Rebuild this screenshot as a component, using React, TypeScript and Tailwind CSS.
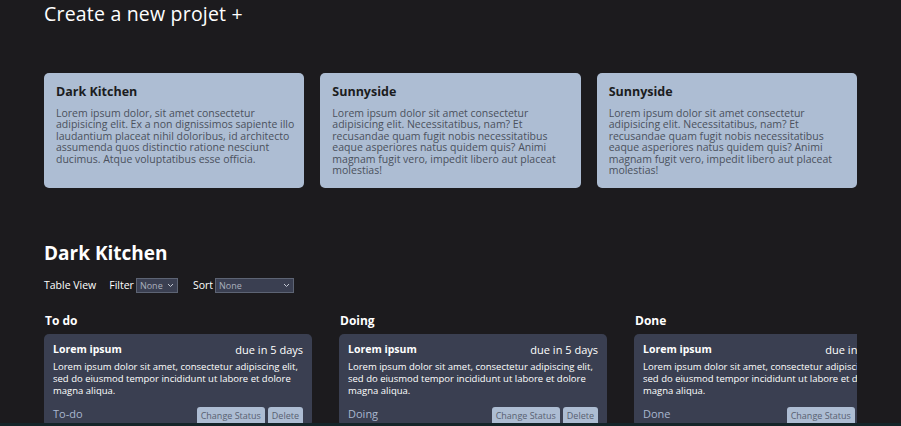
const projects = [
  {
    title: 'Dark Kitchen',
    text: 'Lorem ipsum dolor, sit amet consectetur adipisicing elit. Ex a non dignissimos sapiente illo laudantium placeat nihil doloribus, id architecto assumenda quos distinctio ratione nesciunt ducimus. Atque voluptatibus esse officia.',
  },
  {
    title: 'Sunnyside',
    text: 'Lorem ipsum dolor sit amet consectetur adipisicing elit. Necessitatibus, nam? Et recusandae quam fugit nobis necessitatibus eaque asperiores natus quidem quis? Animi magnam fugit vero, impedit libero aut placeat molestias!',
  },
  {
    title: 'Sunnyside',
    text: 'Lorem ipsum dolor sit amet consectetur adipisicing elit. Necessitatibus, nam? Et recusandae quam fugit nobis necessitatibus eaque asperiores natus quidem quis? Animi magnam fugit vero, impedit libero aut placeat molestias!',
  },
];

const columns = [
  { title: 'To do', status: 'To-do' },
  { title: 'Doing', status: 'Doing' },
  { title: 'Done', status: 'Done' },
];

function Select({ width }: { width: string }) {
  return (
    <div
      className={`${width} h-[15px] flex items-center justify-between px-[3px] bg-[#3a3f51] border border-[#5d6474] text-[9px] font-normal text-[#aab0bd]`}
    >
      <span>None</span>
      <svg width="7" height="5" viewBox="0 0 7 5" fill="none">
        <path d="M1 1l2.5 2.5L6 1" stroke="#c4c9d4" strokeWidth="1" />
      </svg>
    </div>
  );
}

export default function App() {
  return (
    <div className="h-[426px] overflow-hidden bg-[#1c1b1e] text-white px-[44px] font-['Open_Sans',sans-serif]">
      {/* Header */}
      <h1 className="pt-[1px] text-[19.5px] leading-[26px] tracking-[0.2px]">Create a new projet +</h1>

      {/* Projects */}
      <div className="mt-[46px] grid grid-cols-3 gap-[16px]">
        {projects.map((p, i) => (
          <div key={i} className="h-[115px] bg-[#adbdd3] rounded-[5px] pl-[12px] pr-[8px] pt-[11px]">
            <h3 className="text-[12.5px] font-bold text-[#1b1c20] leading-[16px]">{p.title}</h3>
            <p className="mt-[8px] text-[10.5px] leading-[11.4px] text-[#4b515d]">{p.text}</p>
          </div>
        ))}
      </div>

      {/* Board */}
      <h2 className="mt-[52px] text-[19px] font-bold leading-[26px]">Dark Kitchen</h2>
      <div className="mt-[12px] flex items-center text-[10.5px] font-medium">
        <span>Table View</span>
        <span className="ml-[13px] mr-[2px]">Filter</span>
        <Select width="w-[42px]" />
        <span className="ml-[15px] mr-[2px]">Sort</span>
        <Select width="w-[79px]" />
      </div>

      <div className="mt-[19px] flex gap-[27px] overflow-hidden">
        {columns.map((c) => (
          <div key={c.title} className="w-[268px] shrink-0">
            <h4 className="text-[12px] font-bold leading-[16px] pl-[1px]">{c.title}</h4>
            <div className="mt-[5px] bg-[#3a3f51] rounded-[5px] px-[9px] pt-[8px] pb-[3px]">
              <div className="flex justify-between items-center">
                <span className="text-[10.5px] font-bold">Lorem ipsum</span>
                <span className="text-[11px]">due in 5 days</span>
              </div>
              <p className="mt-[3px] text-[9.5px] leading-[12px] font-medium">
                Lorem ipsum dolor sit amet, consectetur adipiscing elit, sed do eiusmod tempor incididunt ut labore et dolore magna aliqua.
              </p>
              <div className="mt-[9px] flex items-end justify-between">
                <span className="text-[11px] text-[#a9b7cf] pb-[1px]">{c.status}</span>
                <div className="flex gap-[3px]">
                  <button className="px-[4px] h-[17px] rounded-t-[3px] bg-[#adbdd3] text-[9px] text-[#586071]">
                    Change Status
                  </button>
                  <button className="px-[4px] h-[17px] rounded-t-[3px] bg-[#adbdd3] text-[9px] text-[#586071]">
                    Delete
                  </button>
                </div>
              </div>
            </div>
          </div>
        ))}
      </div>

      <div className="fixed bottom-0 left-0 right-0 h-[3px] bg-[#142529]" />
    </div>
  );
}
